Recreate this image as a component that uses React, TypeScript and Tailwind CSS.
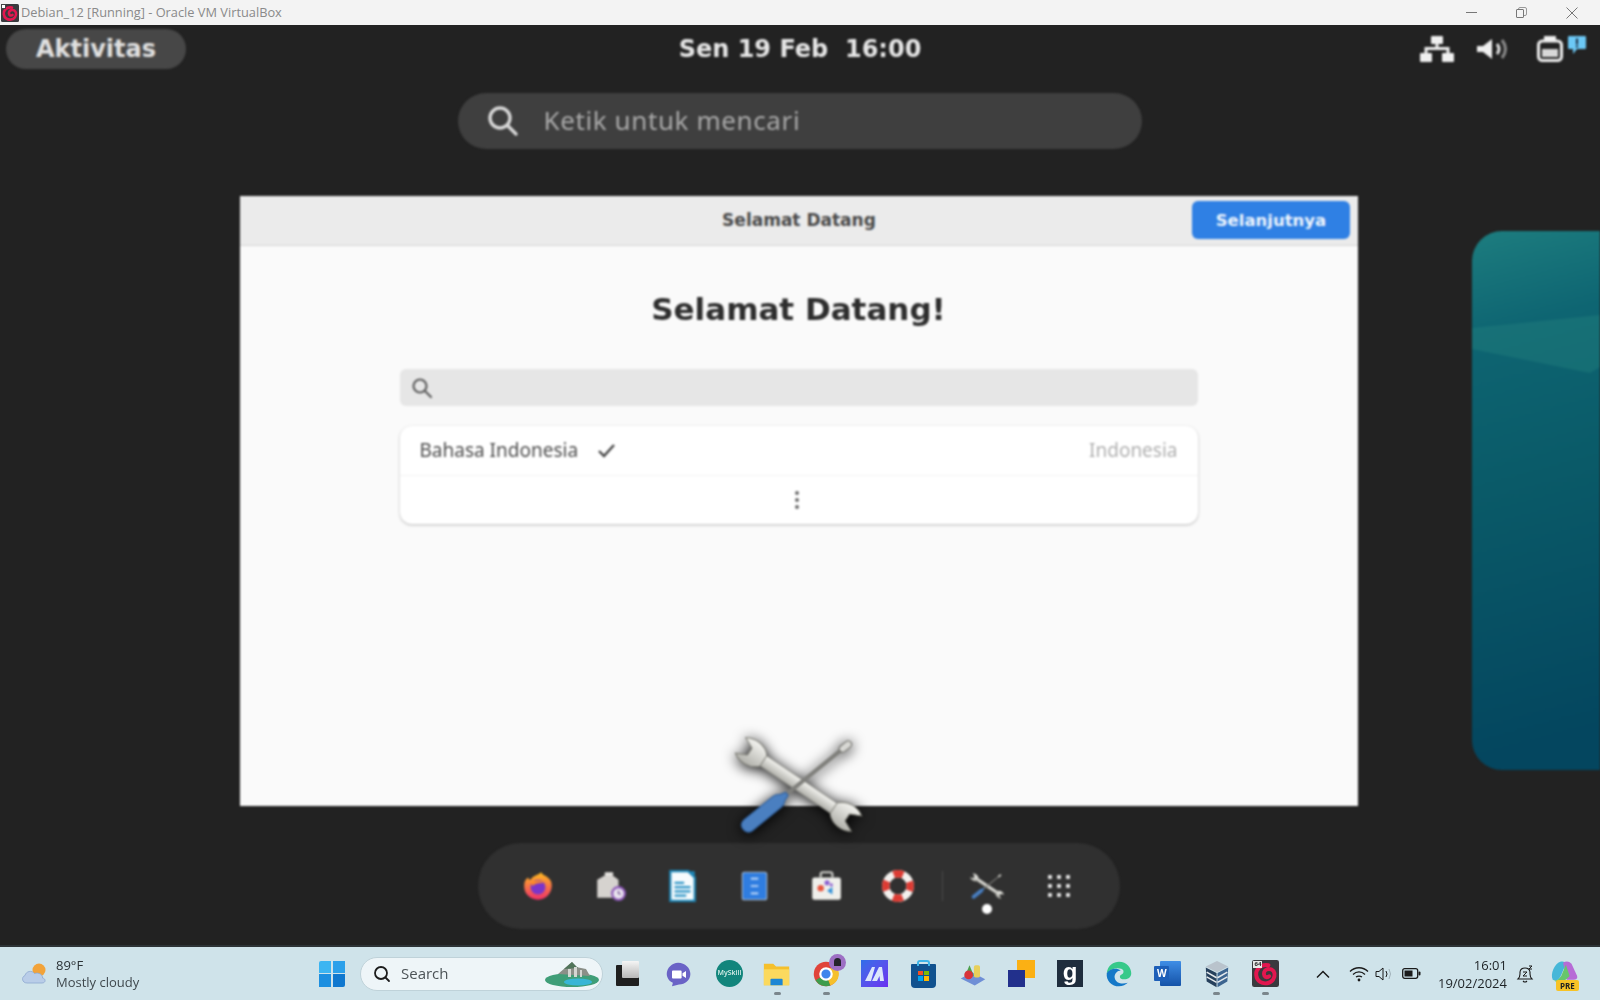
import React from 'react';

const Icon = ({ children, size = 34, vb = '0 0 32 32' }: { children: React.ReactNode; size?: number; vb?: string }) => (
  <svg width={size} height={size} viewBox={vb} className="shrink-0">
    {children}
  </svg>
);

const Tools = ({ width, height, id }: { width: number; height: number; id: string }) => (
  <svg width={width} height={height} viewBox="0 0 128 98" className="overflow-visible">
    <defs>
      <linearGradient id={id} x1="0" y1="0" x2="0" y2="1">
        <stop offset="0" stopColor="#f4f4f0" />
        <stop offset="1" stopColor="#b0b0aa" />
      </linearGradient>
    </defs>
    <g transform="translate(64,49) rotate(34) scale(0.93)">
      <rect x="-52" y="-6.5" width="104" height="13" fill={`url(#${id})`} stroke="#8a8a84" strokeWidth="0.8" />
      <path d="M-46,-7 C-54,-16 -68,-16 -76,-10 L-64,-4.5 L-64,4.5 L-76,10 C-68,16 -54,16 -46,7 Z" fill={`url(#${id})`} stroke="#77776f" strokeWidth="1" />
      <path d="M46,-7 C54,-16 68,-16 76,-10 L64,-4.5 L64,4.5 L76,10 C68,16 54,16 46,7 Z" fill={`url(#${id})`} stroke="#77776f" strokeWidth="1" />
    </g>
    <g transform="translate(64,49) rotate(-39)">
      <rect x="-18" y="-2" width="74" height="4" fill="#7f7f7b" />
      <rect x="54" y="-3.5" width="14" height="7" rx="3.5" fill="#d8d8d4" stroke="#6f6f6a" strokeWidth="1" />
      <path d="M-66,-7 Q-72,-6 -72,0 Q-72,6 -66,7 L-28,7 Q-24,7 -21,4 L-15,2 L-15,-2 L-21,-4 Q-24,-7 -28,-7 Z" fill="#4a7fc0" stroke="#2f5f9c" strokeWidth="1" strokeLinejoin="round" />
    </g>
  </svg>
);

const Debian = ({ size }: { size: number }) => (
  <svg width={size} height={size} viewBox="0 0 18 18">
    <rect width="18" height="18" rx="1.5" fill="#3a3a3e" />
    <path d="M11 3.5 C5 2.5 2.5 7 2.8 10 C3.2 14.5 7 16 10 15.5 C13.5 15 15.5 12 15 9 C14.5 6.5 12 5.5 10 6.2 C8 7 7.5 9 8.3 10.5 C9 11.7 10.5 11.8 11.5 10.8" fill="none" stroke="#e3174f" strokeWidth="2.6" strokeLinecap="round" />
  </svg>
);

const DockCell = ({ children }: { children: React.ReactNode }) => (
  <div className="w-[72px] flex items-center justify-center shrink-0">{children}</div>
);

const DockIcons = () => (
  <>
    <DockCell>
      <Icon>
        <defs>
          <linearGradient id="fx" x1="0" y1="0" x2="0" y2="1">
            <stop offset="0" stopColor="#ffbd1f" />
            <stop offset="1" stopColor="#f0306a" />
          </linearGradient>
        </defs>
        <path d="M3 16 C3 11 5 9 7 8 C7 10 8 10.5 9.5 9.5 C11 6 16 6 19 3 C20 6 25 6 28 11 C30 15 29 22 24 26 C19 30 11 30 6.5 25 C4 22.5 3 19.5 3 16Z" fill="url(#fx)" />
        <circle cx="16" cy="17" r="7" fill="#7b35c9" />
        <path d="M9 13 C12 10 19 10 22 13 C18 12.5 13 13.5 11 16Z" fill="#ff8a25" />
      </Icon>
    </DockCell>
    <DockCell>
      <Icon>
        <path d="M4 10 L13 5 L17 5 L24 10 L24 27 L4 27Z" fill="#d6d3cf" />
        <rect x="11" y="3" width="8" height="3" rx="1" fill="#e8e6e2" />
        <circle cx="24" cy="23" r="6" fill="#e9e4ee" stroke="#8d57b8" strokeWidth="2" />
        <path d="M24 20.5 L24 23 L26 24" stroke="#6e4a90" strokeWidth="1.2" fill="none" />
      </Icon>
    </DockCell>
    <DockCell>
      <Icon>
        <path d="M5 2 L22 2 L28 8 L28 30 L5 30Z" fill="#f6fbfd" stroke="#1d86b7" strokeWidth="2" />
        <path d="M21 2 L28 2 L28 9Z" fill="#1d86b7" />
        <path d="M9 13 H18 M9 17 H24 M9 21 H24 M9 25 H20" stroke="#2e95c6" strokeWidth="2" />
      </Icon>
    </DockCell>
    <DockCell>
      <Icon>
        <rect x="5" y="3" width="23" height="26" rx="2" fill="#2f7de0" stroke="#a9bcd2" strokeWidth="1" />
        <path d="M13 9 H20 M13 16 H20 M13 23 H20" stroke="#cfe2fa" strokeWidth="1.6" />
      </Icon>
    </DockCell>
    <DockCell>
      <Icon>
        <rect x="3" y="8" width="27" height="21" rx="2" fill="#efefeb" />
        <path d="M11 8 V5 Q11 3 13 3 H20 Q22 3 22 5 V8" fill="none" stroke="#cfcfcb" strokeWidth="2" />
        <circle cx="11" cy="18" r="3" fill="#e8563f" />
        <circle cx="17" cy="13" r="2.4" fill="#8a5fd0" />
        <circle cx="21" cy="15" r="1.5" fill="#8a5fd0" />
        <path d="M22 17 L22 24 L17 20.5Z" fill="#2f8fd8" />
      </Icon>
    </DockCell>
    <DockCell>
      <Icon>
        <circle cx="16" cy="16" r="11.5" fill="none" stroke="#f4f1ee" strokeWidth="7" />
        <circle cx="16" cy="16" r="11.5" fill="none" stroke="#dc3b33" strokeWidth="7" strokeDasharray="9 9.06" strokeDashoffset="4.5" />
      </Icon>
    </DockCell>
    <div className="w-px h-[30px] bg-[#4a4a4a] mx-[8px] shrink-0" />
    <DockCell>
      <div className="relative flex items-center justify-center">
        <Tools width={34} height={30} id="steel-small" />
        <span className="absolute top-[33px] w-[10px] h-[10px] rounded-full bg-white" />
      </div>
    </DockCell>
    <DockCell>
      <div className="grid grid-cols-3 gap-x-[5px] gap-y-[5px]">
        {Array.from({ length: 9 }).map((_, i) => (
          <span key={i} className="w-[4px] h-[4px] rounded-[1px] bg-[#e4e4e4]" />
        ))}
      </div>
    </DockCell>
  </>
);

const Cell = ({ children, running, className = 'w-[48.8px]' }: { children: React.ReactNode; running?: boolean; className?: string }) => (
  <div className={`relative h-full flex items-center justify-center shrink-0 ${className}`}>
    {children}
    {running && <span className="absolute bottom-[5px] w-[7px] h-[3px] rounded-full bg-[#7b868c]" />}
  </div>
);

const Taskbar = () => (
  <div className="h-[53px] bg-[#cfe3ea] flex items-center relative font-['Open_Sans',sans-serif] shrink-0 blur-[0.3px]">
    <div className="w-[308px] flex items-center pl-[19px] gap-[5px] shrink-0">
      <Icon size={32}>
        <circle cx="20" cy="12" r="6.5" fill="#f2a33a" />
        <path d="M8 25 C3 25 2 19 6 17.5 C7 13 13 12 15.5 15.5 C20 14 24 17 23.5 20 C27 20.5 27 25 23 25Z" fill="#b9cde8" stroke="#8ea8d0" strokeWidth="0.8" />
      </Icon>
      <div className="text-[13px] leading-[17px] text-[#2b3236]">
        <div>89°F</div>
        <div className="text-[#3f484d]">Mostly cloudy</div>
      </div>
    </div>
    <Cell className="w-[48px]">
      <div className="grid grid-cols-2 gap-[1.5px] w-[26px] h-[26px]">
        <span className="bg-[#3cb5f2] rounded-tl-[2px]" />
        <span className="bg-[#2ba0ea]" />
        <span className="bg-[#1c8fe0]" />
        <span className="bg-[#0f78cf] rounded-br-[2px]" />
      </div>
    </Cell>
    <div className="ml-[4px] w-[243px] h-[34px] rounded-full bg-[#eef5f8] border border-[#bfd2d9] flex items-center pl-[11px] gap-[9px] text-[15px] text-[#4c5357] relative shrink-0">
      <svg width="20" height="20" viewBox="0 0 20 20" fill="none" stroke="#1c1c1c" strokeWidth="1.8" strokeLinecap="round">
        <circle cx="9" cy="9" r="6" />
        <path d="M13.5 13.5 L17 17" />
      </svg>
      <span>Search</span>
      <svg width="56" height="30" viewBox="0 0 56 30" className="absolute right-[2px] top-[1px]">
        <ellipse cx="28" cy="21" rx="27" ry="7" fill="#3f9e78" />
        <ellipse cx="34" cy="23" rx="14" ry="3.5" fill="#38b6d6" />
        <path d="M14 15 L28 3 L32 8 L42 10 L46 17 Z" fill="#8b8f88" />
        <path d="M28 3 L20 10 L34 9Z" fill="#50745a" />
        <path d="M24 18 V10 H27 V18 M30 18 V8 H33 V18 M36 18 V11 H38 V18" fill="#d4d6d2" />
      </svg>
    </div>
    <Cell className="w-[49px]">
      <div className="relative w-[23px] h-[21px] bg-[#1f1f1f] rounded-[1px] mt-[3px]">
        <span className="absolute -top-[4px] left-[6px] w-[17px] h-[17px] bg-gradient-to-b from-[#f5f5f5] to-[#b8b8b8] rounded-[1px]" />
      </div>
    </Cell>
    <Cell className="w-[54px]">
      <Icon size={28}>
        <path d="M15 3 C23 3 29 9 29 16 C29 23 23 28 16 28 L8 30 L9 26 C4.5 24 2 20 2 16 C2 9 8 3 15 3Z" fill="#6a63c6" />
        <path d="M9 12 H18 Q19 12 19 13 V20 Q19 21 18 21 H9 Q8 21 8 20 V13 Q8 12 9 12Z M20 15 L24 12.5 V20.5 L20 18Z" fill="#fff" />
      </Icon>
    </Cell>
    <Cell className="w-[47px]">
      <div className="w-[27px] h-[27px] rounded-full bg-[#12857c] flex items-center justify-center text-[7px] text-[#d8efe9] font-semibold">
        MySkill
      </div>
    </Cell>
    <Cell running>
      <Icon size={30}>
        <path d="M2 5 H12 L15 8 H29 V28 H2Z" fill="#f5c02c" />
        <rect x="2" y="11" width="27" height="17" fill="#fbd95e" />
        <path d="M10 21 H21 Q22 21 22 22 V28 H9 V22 Q9 21 10 21Z" fill="#1d86d4" />
      </Icon>
    </Cell>
    <Cell running>
      <div className="relative">
        <Icon size={28}>
          <circle cx="16" cy="16" r="14" fill="#e0443a" />
          <path d="M16 16 L4 23 A14 14 0 0 0 21 29Z" fill="#3d9c4c" />
          <path d="M16 9 L29 9 A14 14 0 0 1 21 29 L16 16Z" fill="#f5c02c" />
          <circle cx="16" cy="16" r="6.5" fill="#3f85ec" stroke="#fff" strokeWidth="2.5" />
        </Icon>
        <span className="absolute -top-[6px] -right-[6px] w-[17px] h-[17px] rounded-full bg-[#9d6fc4] flex items-center justify-center">
          <span className="w-[7px] h-[8px] bg-[#24242c] rounded-t-full" />
        </span>
      </div>
    </Cell>
    <Cell>
      <div className="w-[27px] h-[27px] bg-gradient-to-br from-[#2d6ee8] to-[#6a2df0] flex items-center justify-center">
        <svg width="20" height="14" viewBox="0 0 20 14" fill="#dbe6fb">
          <path d="M0 14 L7 0 L10 0 L6 14Z M7 14 L14 0 L17 0 L19 14 L15 14 L14.5 9 L12 14Z" />
        </svg>
      </div>
    </Cell>
    <Cell>
      <div className="relative w-[25px] h-[24px] mt-[4px] bg-[#11528f] rounded-b-[4px] rounded-t-[1px] grid grid-cols-2 gap-[1px] p-[7px]">
        <span className="absolute -top-[4px] left-[6px] w-[13px] h-[6px] rounded-t-[3px] border-2 border-b-0 border-[#3fb4e8]" />
        <span className="bg-[#f25022]" />
        <span className="bg-[#7fba00]" />
        <span className="bg-[#00a4ef]" />
        <span className="bg-[#ffb900]" />
      </div>
    </Cell>
    <Cell>
      <Icon size={28}>
        <path d="M2 21 L15 14 L30 22 L18 29Z" fill="#6f8fd6" />
        <rect x="17" y="6" width="7" height="14" rx="2" fill="#e8cf5a" />
        <path d="M12 6 L17 18 L7 18Z" fill="#4ca04c" />
        <circle cx="11" cy="17" r="5" fill="#d8333a" />
      </Icon>
    </Cell>
    <Cell>
      <div className="relative w-[27px] h-[27px]">
        <span className="absolute right-0 top-0 w-[18px] h-[18px] bg-[#fbb014]" />
        <span className="absolute left-0 bottom-0 w-[17px] h-[17px] bg-[#22308c]" />
      </div>
    </Cell>
    <Cell>
      <div className="w-[26px] h-[27px] bg-[#1f2d3d] flex items-center justify-center text-white font-bold text-[24px] leading-none pb-[4px] font-['Liberation_Sans',sans-serif]">
        g
      </div>
    </Cell>
    <Cell>
      <Icon size={28}>
        <path d="M2 15 C3 6 10 2 16 2 C25 2 30 9 30 15 C30 20 26 22 22 22 C19 22 17 21 17 19 C17 16 22 17 21 12 C19 8 8 8 2 15Z" fill="#37c98a" />
        <path d="M2 15 C1 24 8 30 16 30 C20 30 24 28 26 26 C20 28 12 27 11 20 C10.5 16 14 12 18 12 C13 8 5 10 2 15Z" fill="#1478c8" />
      </Icon>
    </Cell>
    <Cell>
      <div className="relative w-[27px] h-[25px]">
        <span className="absolute right-0 top-0 w-[21px] h-[25px] bg-gradient-to-b from-[#3f8ee6] to-[#1553a8] rounded-[1px]" />
        <span className="absolute left-0 top-[5px] w-[15px] h-[15px] bg-[#1d5fb8] text-white text-[10px] font-bold leading-[15px] text-center rounded-[1px]">
          W
        </span>
      </div>
    </Cell>
    <Cell running>
      <Icon size={30}>
        <path d="M16 2 L28 8 L16 14 L4 8Z" fill="#b9c3cc" />
        <path d="M4 9 L15.5 15 L15.5 30 L5 24Z" fill="#26405c" />
        <path d="M28 9 L16.5 15 L16.5 30 L27 24Z" fill="#3d6590" />
        <path d="M5 14 L15.5 20 M5 19 L15.5 25 M27 14 L16.5 20 M27 19 L16.5 25" stroke="#e4e8ec" strokeWidth="1.6" />
      </Icon>
    </Cell>
    <Cell running className="w-[50px]">
      <div className="relative">
        <Debian size={27} />
        <span className="absolute left-[1px] top-[1px] px-[1px] bg-[#e8e8e8] text-[6px] leading-[7px] font-bold text-[#222]">64</span>
      </div>
    </Cell>
    <div className="flex items-center ml-[18px] h-full text-[#1d2225]">
      <svg width="16" height="10" viewBox="0 0 16 10" fill="none" stroke="#1b1b1b" strokeWidth="1.5" className="ml-[6px]">
        <path d="M2 8.5 L8 2.5 L14 8.5" />
      </svg>
      <svg width="20" height="16" viewBox="0 0 20 16" fill="none" stroke="#1b1b1b" strokeWidth="1.3" className="ml-[18px]">
        <path d="M1 5.5 C6 0.5 14 0.5 19 5.5 M4 8.5 C7.5 5 12.5 5 16 8.5 M7 11 C8.5 10 11.5 10 13 11" />
        <circle cx="10" cy="14" r="1.4" fill="#1b1b1b" stroke="none" />
      </svg>
      <svg width="20" height="16" viewBox="0 0 20 16" fill="none" stroke="#1b1b1b" strokeWidth="1" className="ml-[6px]">
        <path d="M1 5.5 H4 L8 2 V14 L4 10.5 H1Z" />
        <path d="M11 5 Q13 8 11 11" />
        <path d="M14 3 Q17 8 14 13" stroke="#9fb0b8" />
      </svg>
      <svg width="19" height="11" viewBox="0 0 19 11" className="ml-[7px]">
        <rect x="0.7" y="0.7" width="15" height="9.6" rx="2" fill="none" stroke="#1b1b1b" strokeWidth="1.3" />
        <rect x="2.5" y="2.5" width="8" height="6" fill="#1b1b1b" />
        <rect x="16.5" y="3.5" width="2" height="4" rx="1" fill="#1b1b1b" />
      </svg>
      <div className="w-[80px] ml-[6px] text-right text-[13px] leading-[18px]">
        <div>16:01</div>
        <div>19/02/2024</div>
      </div>
      <svg width="18" height="18" viewBox="0 0 18 18" fill="none" stroke="#1b1b1b" strokeWidth="1.1" className="ml-[9px]">
        <path d="M2 14 Q4 12 4 9 V7 Q4.5 3 9 3 Q13.5 3 14 7 V9 Q14 12 16 14Z M7 16 Q9 18 11 16" />
        <path d="M7 7 H11 L7 11 H11 M13 1 H16 L13 4 H16" strokeWidth="1" />
      </svg>
      <div className="relative ml-[15px]">
        <Icon size={30}>
          <path d="M4 22 C1 16 6 5 12 3 C15 2 17 3 18 5 L13 17 Q11 22 7 23Z" fill="#46b7d8" />
          <path d="M15 4 Q20 1 24 5 L30 18 Q31 22 26 22 L19 22Z" fill="#b76bd6" />
          <path d="M4 22 Q8 25 13 18 L18 6 L22 18 Q16 25 9 25Z" fill="#67c66c" />
        </Icon>
        <span className="absolute left-[7px] bottom-[-2px] w-[23px] h-[11px] rounded-[2px] bg-[#f7c326] text-[8px] leading-[11px] font-bold text-center text-[#222]">
          PRE
        </span>
      </div>
    </div>
  </div>
);

export default function App() {
  return (
    <div className="w-[1600px] h-[1000px] overflow-hidden flex flex-col bg-[#222222]">
      {/* VirtualBox title bar */}
      <div className="h-[25px] bg-[#f3f3f3] flex items-center pl-[1px] shrink-0 font-['Open_Sans',sans-serif]">
        <div className="relative">
          <Debian size={18} />
          <span className="absolute left-0 top-0 w-[5px] h-[5px] bg-white border border-[#444]" />
        </div>
        <span className="ml-[2px] text-[12.8px] text-[#8a8a8a]">Debian_12 [Running] - Oracle VM VirtualBox</span>
        <div className="ml-auto flex items-center gap-[39px] pr-[22px]">
          <span className="w-[11px] h-px bg-[#777]" />
          <span className="relative w-[11px] h-[11px]">
            <span className="absolute left-0 bottom-0 w-[8px] h-[9px] border border-[#777] rounded-[1px] bg-[#f3f3f3] z-10" />
            <span className="absolute right-0 top-0 w-[9px] h-[9px] border border-[#999] rounded-[2px]" />
          </span>
          <svg width="12" height="12" viewBox="0 0 12 12" stroke="#777" strokeWidth="1">
            <path d="M0.5 0.5 L11.5 11.5 M11.5 0.5 L0.5 11.5" />
          </svg>
        </div>
      </div>

      {/* guest desktop */}
      <div className="flex-1 relative overflow-hidden blur-[0.8px] font-['DejaVu_Sans',sans-serif]">
        <div className="h-[48px] relative flex items-center justify-center">
          <div className="absolute left-[6px] top-[4px] w-[180px] h-[40px] rounded-full bg-[#474747] flex items-center justify-center text-[24px] font-bold text-[#e0e0e0]">
            Aktivitas
          </div>
          <div className="text-[24px] font-bold text-[#e6e6e6] whitespace-pre">Sen 19 Feb  16:00</div>
          <div className="absolute right-[14px] top-[11px] flex items-center">
            <svg width="34" height="26" viewBox="0 0 34 26" fill="#f0f0f0">
              <rect x="11" y="0" width="12" height="8" rx="1" />
              <rect x="0" y="17" width="12" height="9" rx="1" />
              <rect x="22" y="17" width="12" height="9" rx="1" />
              <path d="M15.5 8 H18.5 V11 H29.5 V17 H26.5 V14 H7.5 V17 H4.5 V11 H15.5Z" />
            </svg>
            <svg width="34" height="24" viewBox="0 0 34 24" fill="none" className="ml-[23px]">
              <path d="M0 9 H6 L15 2 V22 L6 15 H0Z" fill="#f0f0f0" />
              <path d="M20 7 Q24 12 20 17" stroke="#e0e0e0" strokeWidth="3" />
              <path d="M25 3 Q32 12 25 21" stroke="#8a8a8a" strokeWidth="3" />
            </svg>
            <svg width="26" height="26" viewBox="0 0 26 26" fill="none" className="ml-[26px]">
              <rect x="1.5" y="5" width="23" height="19.5" rx="4" stroke="#f0f0f0" strokeWidth="3" />
              <rect x="7" y="0" width="12" height="4" fill="#f0f0f0" />
              <rect x="5" y="13" width="16" height="8" fill="#d8d8d8" />
            </svg>
            <svg width="18" height="18" viewBox="0 0 18 18" className="-mt-[8px] ml-[5px]">
              <path d="M1 0 H17 Q18 0 18 1 V12 Q18 13 17 13 H9 L5 18 V13 H1 Q0 13 0 12 V1 Q0 0 1 0Z" fill="#6cc8f5" />
              <rect x="8" y="2.5" width="2" height="6" fill="#1a2a40" />
              <rect x="8" y="9.5" width="2" height="2" fill="#1a2a40" />
            </svg>
          </div>
        </div>

        <div className="flex justify-center mt-[20px]">
          <div className="w-[684px] h-[56px] rounded-full bg-[#3f3f3f] flex items-center pl-[27px] ml-[-1px] gap-[23px] text-[26px] tracking-[0.6px] text-[#a9a9a9] font-['Noto_Sans',sans-serif]">
            <svg width="36" height="36" viewBox="0 0 36 36" fill="none" stroke="#d8d8d8" strokeWidth="3.4" strokeLinecap="round">
              <circle cx="15" cy="15" r="10" />
              <path d="M22.5 22.5 L31 31" />
            </svg>
            <span className="-mt-[1px]">Ketik untuk mencari</span>
          </div>
        </div>

        {/* window overview row */}
        <div className="flex mt-[47px] pl-[240px]">
          <div className="w-[1118px] h-[610px] bg-[#fafafa] flex flex-col shrink-0 items-center">
            <div className="relative w-full h-[50px] bg-[#ebebeb] border-b border-[#d6d6d6] flex items-center justify-center text-[17px] font-bold text-[#4a4a4a] shrink-0 pt-[1px]">
              Selamat Datang
              <div className="absolute right-[8px] top-[5px] w-[158px] h-[38px] rounded-[6px] bg-[#2f80e4] flex items-center justify-center pt-[2px] text-[16.5px] text-[#eef5fd]">
                Selanjutnya
              </div>
            </div>
            <h1 className="mt-[43px] mr-[1px] text-[31px] leading-[40px] font-bold text-[#2e2e2e]">Selamat Datang!</h1>
            <div className="mt-[40px] mr-[1px] w-[798px] h-[37px] rounded-[6px] bg-[#e6e6e6] flex items-center pl-[10px]">
              <svg width="24" height="24" viewBox="0 0 24 24" fill="none" stroke="#5e5e5e" strokeWidth="2.2" strokeLinecap="round">
                <circle cx="10" cy="10" r="6.5" />
                <path d="M15 15 L21 21" />
              </svg>
            </div>
            <div className="mt-[20px] mr-[1px] w-[798px] h-[98px] rounded-[12px] bg-white shadow-[0_1px_3px_rgba(0,0,0,0.25)] flex flex-col">
              <div className="h-[50px] flex items-center px-[20px] border-b border-[#f2f2f2] text-[19px] font-['Noto_Sans',sans-serif]">
                <span className="text-[#4d4d4d]">Bahasa Indonesia</span>
                <svg width="20" height="16" viewBox="0 0 20 16" fill="none" stroke="#444" strokeWidth="2.4" className="ml-[19px]">
                  <path d="M2 8 L7 13 L17 2" />
                </svg>
                <span className="ml-auto text-[#b0b0b0]">Indonesia</span>
              </div>
              <div className="flex-1 flex flex-col items-center justify-center gap-[3px] pr-[3px]">
                <span className="w-[4px] h-[4px] rounded-full bg-[#6a6a6a]" />
                <span className="w-[4px] h-[4px] rounded-full bg-[#6a6a6a]" />
                <span className="w-[4px] h-[4px] rounded-full bg-[#6a6a6a]" />
              </div>
            </div>
          </div>
          <div className="ml-[114px] mt-[35px] w-[200px] h-[539px] rounded-l-[30px] bg-[linear-gradient(165deg,#1d7d7f_0%,#0e6572_18%,#0a5a68_45%,#04465f_90%)] shrink-0 overflow-hidden">
            <svg width="128" height="539" viewBox="0 0 128 539">
              <path d="M0 97 L128 84 L128 136 L118 142 L0 118Z" fill="#2f8f86" fillOpacity="0.28" />
            </svg>
          </div>
        </div>

        {/* dock */}
        <div className="absolute left-[478px] bottom-[16px] w-[642px] h-[86px] rounded-full bg-[#303030] flex items-center pl-[24px]">
          <DockIcons />
        </div>

        {/* icon being dragged onto the dock */}
        <div className="absolute left-[735px] top-[711px] drop-shadow-[0_2px_7px_rgba(0,0,0,1)]">
          <Tools width={127} height={97} id="steel-big" />
        </div>
      </div>

      <div className="h-[2px] bg-[#2d3336] shrink-0" />
      <Taskbar />
    </div>
  );
}
